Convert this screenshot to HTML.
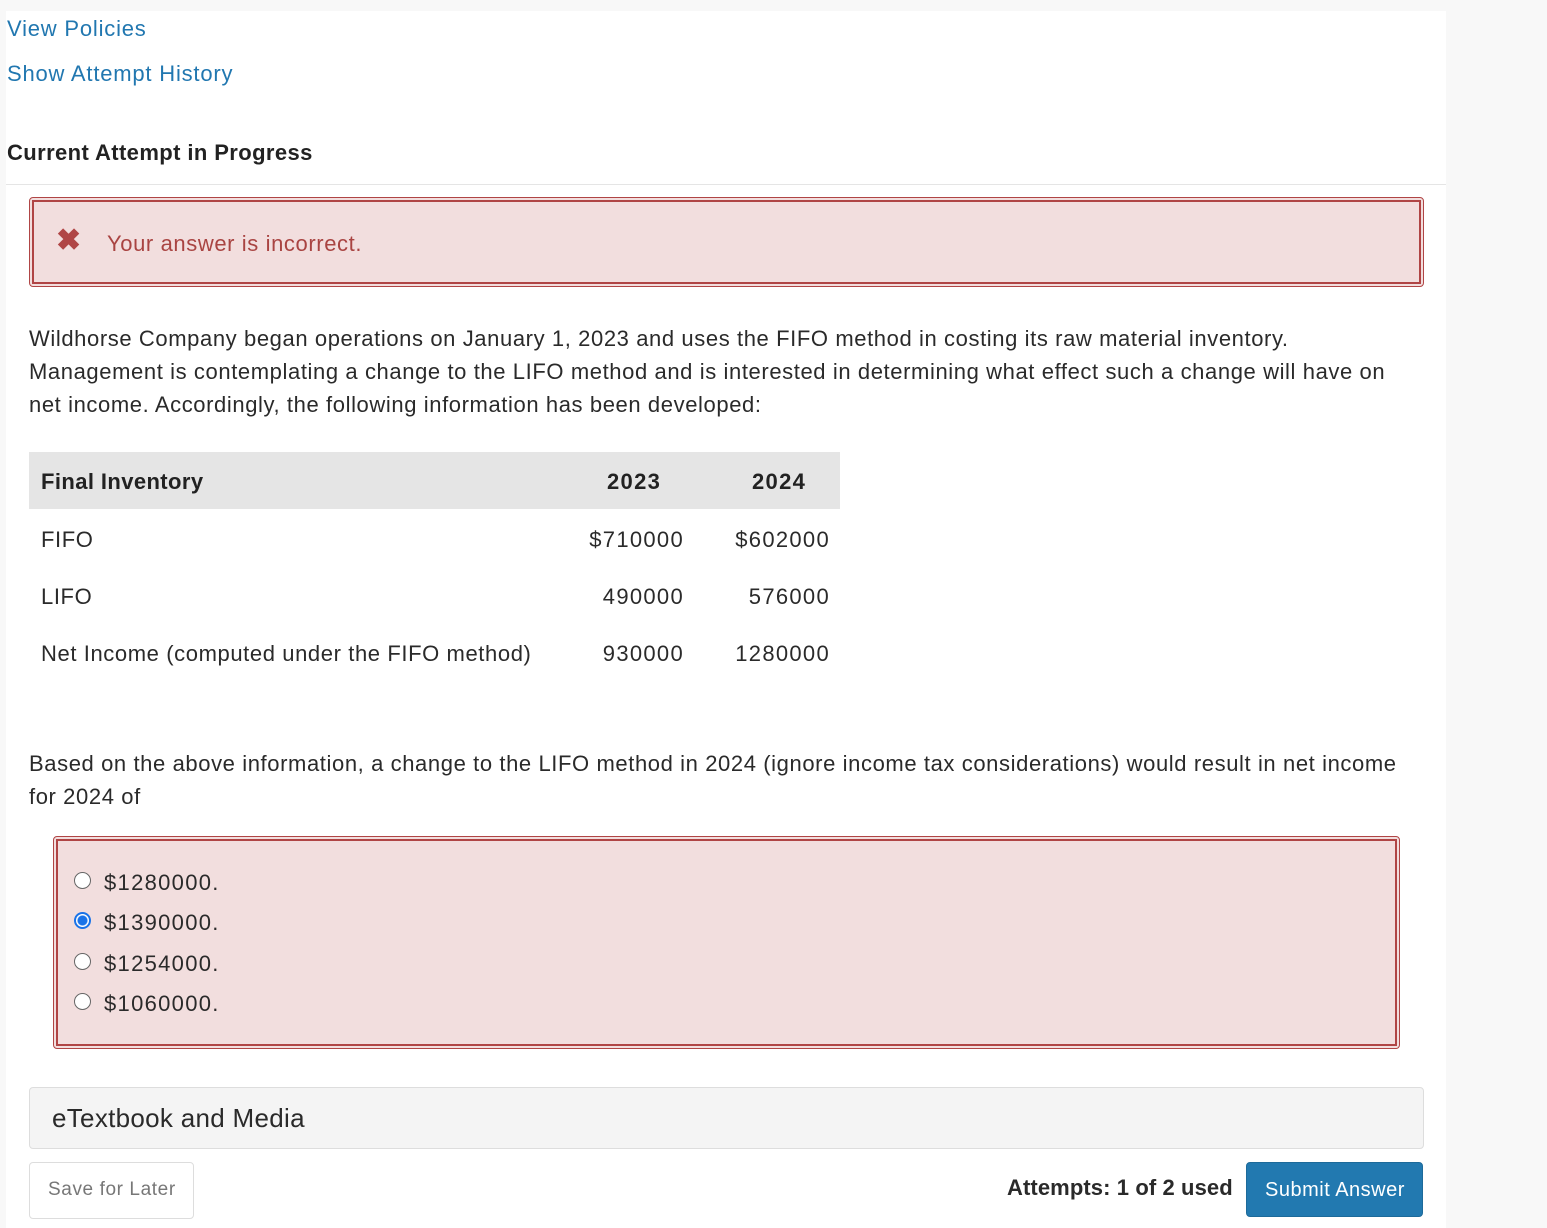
<!DOCTYPE html>
<html><head><meta charset="utf-8"><style>
body{margin:0;background:#f8f8f8;font-family:"Liberation Sans",sans-serif;color:#222;width:1547px;height:1228px;overflow:hidden;position:relative}
.a{position:absolute;white-space:nowrap}
#panel{position:absolute;left:6px;top:11px;width:1440px;height:1217px;background:#fff}
.lnk{color:#2177b0;font-size:22px;letter-spacing:0.8px}
.err{position:absolute;border:1px solid #b04545;border-radius:4px;background:#f2dede}
.err:before{content:"";position:absolute;left:2px;top:2px;right:2px;bottom:2px;border:2px solid #b04545}
.p{font-size:22px;color:#2a2a2a;line-height:33px;letter-spacing:0.6px}
.n{font-size:22px;color:#2a2a2a;line-height:33px;letter-spacing:1.3px}
.r{position:absolute;width:17px;height:17px;border:1.5px solid #666;border-radius:50%;background:#fff;box-sizing:border-box}
.opt{font-size:22px;color:#2a2a2a;letter-spacing:1.3px}
</style></head><body>
<div id="panel"></div>
<div class="a lnk" style="left:7px;top:16px">View Policies</div>
<div class="a lnk" style="left:7px;top:61px">Show Attempt History</div>
<div class="a" style="left:7px;top:140px;font-size:22px;font-weight:bold;color:#222;letter-spacing:0.4px">Current Attempt in Progress</div>
<div class="a" style="left:6px;top:184px;width:1440px;height:1px;background:#e5e5e5"></div>
<div class="err" style="left:29px;top:197px;width:1393px;height:88px"></div>
<div class="a" style="left:56px;top:223px;font-size:30px;font-weight:bold;color:#b04545">✖</div>
<div class="a" style="left:107px;top:231px;font-size:22px;color:#a94442;letter-spacing:0.6px">Your answer is incorrect.</div>
<div class="a p" style="left:29px;top:322px">Wildhorse Company began operations on January 1, 2023 and uses the FIFO method in costing its raw material inventory.<br>Management is contemplating a change to the LIFO method and is interested in determining what effect such a change will have on<br>net income. Accordingly, the following information has been developed:</div>
<div class="a" style="left:29px;top:452px;width:811px;height:57px;background:#e5e5e5"></div>
<div class="a" style="left:41px;top:469px;font-size:22px;font-weight:bold;letter-spacing:0.4px">Final Inventory</div>
<div class="a" style="left:607px;top:469px;font-size:22px;font-weight:bold;letter-spacing:1.3px">2023</div>
<div class="a" style="left:752px;top:469px;font-size:22px;font-weight:bold;letter-spacing:1.3px">2024</div>
<div class="a p" style="left:41px;top:523px">FIFO</div>
<div class="a p" style="left:41px;top:580px">LIFO</div>
<div class="a p" style="left:41px;top:637px">Net Income (computed under the FIFO method)</div>
<div class="a n" style="right:863px;top:523px">$710000</div>
<div class="a n" style="right:863px;top:580px">490000</div>
<div class="a n" style="right:863px;top:637px">930000</div>
<div class="a n" style="right:717px;top:523px">$602000</div>
<div class="a n" style="right:717px;top:580px">576000</div>
<div class="a n" style="right:717px;top:637px">1280000</div>
<div class="a p" style="left:29px;top:747px">Based on the above information, a change to the LIFO method in 2024 (ignore income tax considerations) would result in net income<br>for 2024 of</div>
<div class="err" style="left:53px;top:836px;width:1345px;height:211px"></div>
<div class="r" style="left:74px;top:872px"></div>
<div class="r" style="left:74px;top:912px;border:2px solid #1a73e8;background:radial-gradient(circle,#1a73e8 4.5px,#fff 5.5px)"></div>
<div class="r" style="left:74px;top:953px"></div>
<div class="r" style="left:74px;top:993px"></div>
<div class="a opt" style="left:104px;top:870px">$1280000.</div>
<div class="a opt" style="left:104px;top:910px">$1390000.</div>
<div class="a opt" style="left:104px;top:951px">$1254000.</div>
<div class="a opt" style="left:104px;top:991px">$1060000.</div>
<div class="a" style="left:29px;top:1087px;width:1393px;height:60px;background:#f4f4f4;border:1px solid #ddd;border-radius:4px"></div>
<div class="a" style="left:52px;top:1103px;font-size:26px;color:#2a2a2a;letter-spacing:0.3px">eTextbook and Media</div>
<div class="a" style="left:29px;top:1162px;width:163px;height:55px;border:1px solid #ddd;border-radius:4px;background:#fff"></div>
<div class="a" style="left:48px;top:1179px;font-size:19px;color:#777;letter-spacing:0.6px">Save for Later</div>
<div class="a" style="left:1007px;top:1175px;font-size:22px;font-weight:bold;color:#2a2a2a;letter-spacing:0.1px">Attempts: 1 of 2 used</div>
<div class="a" style="left:1246px;top:1162px;width:177px;height:55px;background:#2279b0;border-radius:4px;border:1px solid #1d6a9a;box-sizing:border-box"></div>
<div class="a" style="left:1265px;top:1179px;font-size:20px;color:#fff;letter-spacing:0.5px">Submit Answer</div>
</body></html>
